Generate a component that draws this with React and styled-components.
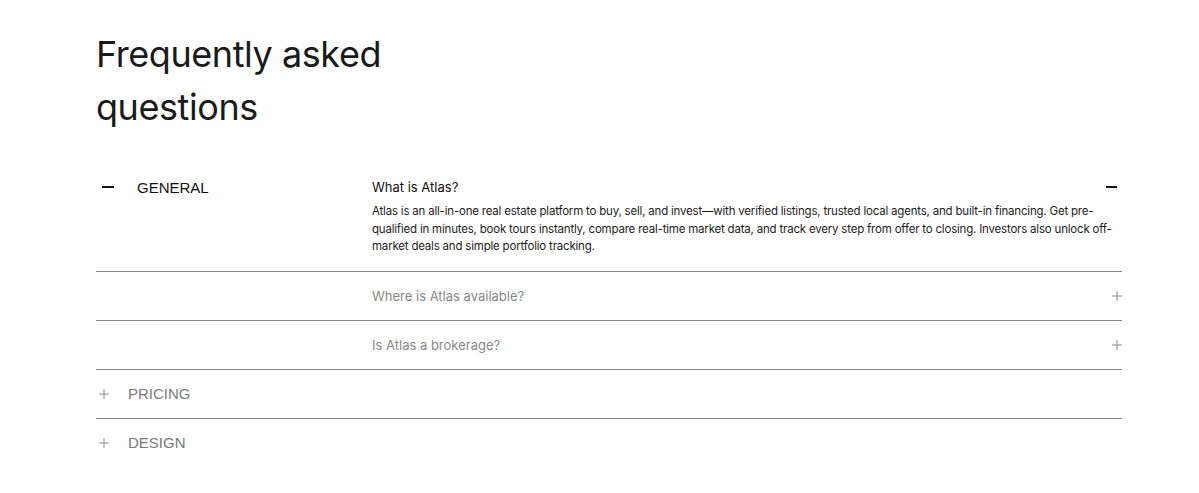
import React from "react"
import styled, { createGlobalStyle } from "styled-components"

const GlobalStyle = createGlobalStyle`
  body {
    margin: 0;
    background: #fff;
    font-family: "Inter", "Liberation Sans", sans-serif;
    color: #111;
  }
`

const Page = styled.div`
  padding: 28px 77px 0 96px;
`

const Title = styled.h1`
  margin: 0 0 29px;
  font-family: "Inter", sans-serif;
  font-weight: 400;
  font-size: 36px;
  line-height: 53px;
  letter-spacing: -0.012em;
  color: #1a1a1a;
  max-width: 340px;
`

const Row = styled.div`
  display: grid;
  grid-template-columns: 276px 1fr;
  border-bottom: 1px solid #858585;
`

const CategoryCell = styled.div`
  display: flex;
  align-items: center;
  height: 48px;
  font-family: "Liberation Sans", Arial, sans-serif;
  font-size: 15px;
  color: ${(p) => (p.$open ? "#111" : "#7a7a7a")};
`

const IconBox = styled.span`
  display: flex;
  align-items: center;
  justify-content: ${(p) => (p.$open ? "flex-end" : "flex-start")};
  width: ${(p) => (p.$open ? "41px" : "32px")};
  padding: ${(p) => (p.$open ? "0 23px 0 0" : "0 0 0 3px")};
  box-sizing: border-box;
`

const QuestionCell = styled.div`
  padding: 16px 0 ${(p) => (p.$open ? "15px" : "16px")};
`

const QuestionHead = styled.div`
  display: flex;
  align-items: center;
  justify-content: space-between;
  font-size: 13px;
  line-height: 16px;
  color: ${(p) => (p.$open ? "#111" : "#888")};
`

const Answer = styled.p`
  margin: 8px 0 0;
  max-width: 742px;
  font-size: 11.5px;
  line-height: 17.5px;
  letter-spacing: -0.2px;
  color: #1c1c1c;
`

const Minus = ({ width = 12 }) => (
  <svg width={width} height="2" viewBox={`0 0 ${width} 2`}>
    <rect width={width} height="2" fill="#111" />
  </svg>
)

const Plus = () => (
  <svg width="10" height="10" viewBox="0 0 10 10">
    <path d="M5 0v10M0 5h10" stroke="#8a8a8a" strokeWidth="1" />
  </svg>
)

const RightIcon = styled.span`
  display: flex;
  padding-right: ${(p) => (p.$open ? "5px" : "0")};
`

const questions = [
  {
    q: "What is Atlas?",
    a: "Atlas is an all-in-one real estate platform to buy, sell, and invest\u2014with verified listings, trusted local agents, and built-in financing. Get pre-qualified in minutes, book tours instantly, compare real-time market data, and track every step from offer to closing. Investors also unlock off-market deals and simple portfolio tracking.",
    open: true,
  },
  { q: "Where is Atlas available?" },
  { q: "Is Atlas a brokerage?" },
]

const Category = ({ label, open }) => (
  <CategoryCell $open={open}>
    <IconBox $open={open}>{open ? <Minus /> : <Plus />}</IconBox>
    {label}
  </CategoryCell>
)

export default function App() {
  return (
    <Page>
      <GlobalStyle />
      <Title>Frequently asked questions</Title>
      {questions.map((item, i) => (
        <Row key={item.q}>
          <div>{i === 0 && <Category label="GENERAL" open />}</div>
          <QuestionCell $open={item.open}>
            <QuestionHead $open={item.open}>
              {item.q}
              <RightIcon $open={item.open}>
                {item.open ? <Minus width={11} /> : <Plus />}
              </RightIcon>
            </QuestionHead>
            {item.open && <Answer>{item.a}</Answer>}
          </QuestionCell>
        </Row>
      ))}
      <Row>
        <Category label="PRICING" />
      </Row>
      <Category label="DESIGN" />
    </Page>
  )
}
